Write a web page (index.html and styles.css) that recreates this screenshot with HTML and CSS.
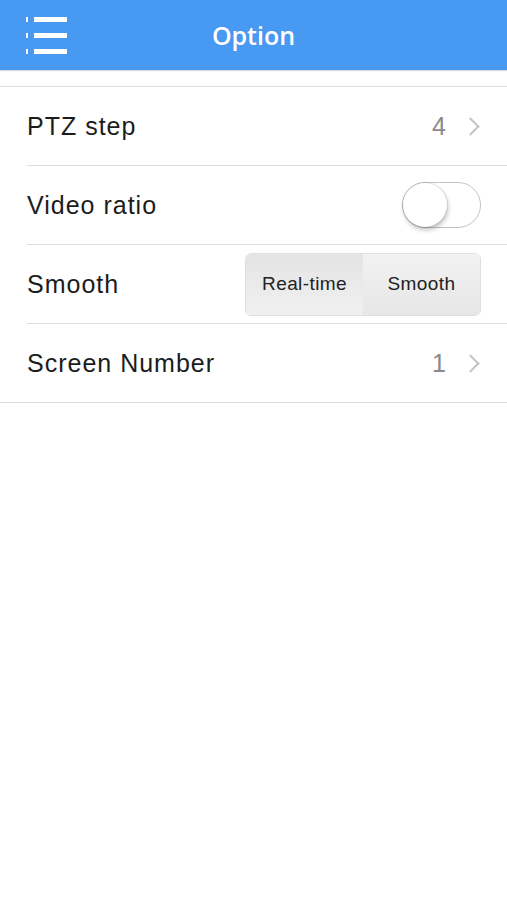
FILE: index.html
```html
<!DOCTYPE html>
<html lang="en">

<head>
  <meta charset="UTF-8">
  <meta name="viewport" content="width=device-width, initial-scale=1.0">
  <title>Option</title>
  <link rel="stylesheet" href="styles.css">
</head>

<body>
  <div class="top-bar">
    <div class="menu-icon">
      <svg width="42" height="40" viewBox="0 0 42 40">
        <rect x="0" y="1" width="2" height="5" fill="#fff" />
        <rect x="8" y="1" width="33" height="5" fill="#fff" />
        <rect x="0" y="17" width="2" height="5" fill="#fff" />
        <rect x="8" y="17" width="33" height="5" fill="#fff" />
        <rect x="0" y="33" width="2" height="5" fill="#fff" />
        <rect x="8" y="33" width="33" height="5" fill="#fff" />
      </svg>
    </div>
    <h1>Option</h1>
  </div>

  <ul class="option-list">
    <li class="option-item">
      <span class="label">PTZ step</span>
      <span class="value">4 <span class="chevron"></span></span>
    </li>
    <li class="option-item">
      <span class="label">Video ratio</span>
      <span class="switch"><span class="knob"></span></span>
    </li>
    <li class="option-item">
      <span class="label">Smooth</span>
      <span class="segmented">
        <span class="segment selected">Real-time</span>
        <span class="segment">Smooth</span>
      </span>
    </li>
    <li class="option-item">
      <span class="label">Screen Number</span>
      <span class="value">1 <span class="chevron"></span></span>
    </li>
  </ul>
</body>

</html>
```

FILE: styles.css
```css
body {
  margin: 0;
  font-family: "Liberation Sans", Arial, sans-serif;
  background-color: white;
}

.top-bar {
  height: 70px;
  background-color: #4799f1;
  display: flex;
  align-items: center;
  justify-content: center;
  position: relative;
  box-shadow: 0 1px 1px rgba(0, 0, 0, 0.15);
}

.top-bar h1 {
  margin: 0;
  color: white;
  font-size: 25px;
  font-weight: 600;
  font-family: "Open Sans", sans-serif;
}

.menu-icon {
  position: absolute;
  left: 26px;
  top: 16px;
  height: 40px;
}

.option-list {
  list-style: none;
  margin: 16px 0 0 0;
  padding: 0 0 0 27px;
  border-top: 1px solid #dedede;
  border-bottom: 1px solid #dedede;
}

.option-item {
  height: 78px;
  display: flex;
  align-items: center;
  justify-content: space-between;
  padding-right: 26px;
  border-bottom: 1px solid #dedede;
}

.option-item:last-child {
  border-bottom: none;
}

.label {
  font-size: 25px;
  letter-spacing: 1px;
  color: #1c1c1c;
}

.value {
  font-size: 25px;
  color: #8a8a8a;
  display: flex;
  align-items: center;
  gap: 18px;
}

.chevron {
  width: 11px;
  height: 11px;
  border-top: 2px solid #c4c4c4;
  border-right: 2px solid #c4c4c4;
  transform: rotate(45deg);
  margin-right: 4px;
}

.switch {
  width: 77px;
  height: 44px;
  border: 1px solid #c4c4c4;
  border-radius: 24px;
  position: relative;
  background-color: white;
}

.knob {
  position: absolute;
  left: 0;
  top: 0;
  width: 44px;
  height: 44px;
  border-radius: 50%;
  background-color: white;
  box-shadow: 0 0 0 1px rgba(0, 0, 0, 0.08), 1px 3px 5px rgba(0, 0, 0, 0.25);
}

.segmented {
  display: flex;
  width: 234px;
  height: 61px;
  border: 1px solid #e0e0e0;
  border-radius: 6px;
  overflow: hidden;
}

.segment {
  flex: 1;
  display: flex;
  align-items: center;
  justify-content: center;
  font-size: 19px;
  letter-spacing: 0.4px;
  color: #222;
  background: linear-gradient(#f2f2f2, #e6e6e6);
}

.segment.selected {
  background: linear-gradient(#e4e4e4, #f0f0f0);
}
```
